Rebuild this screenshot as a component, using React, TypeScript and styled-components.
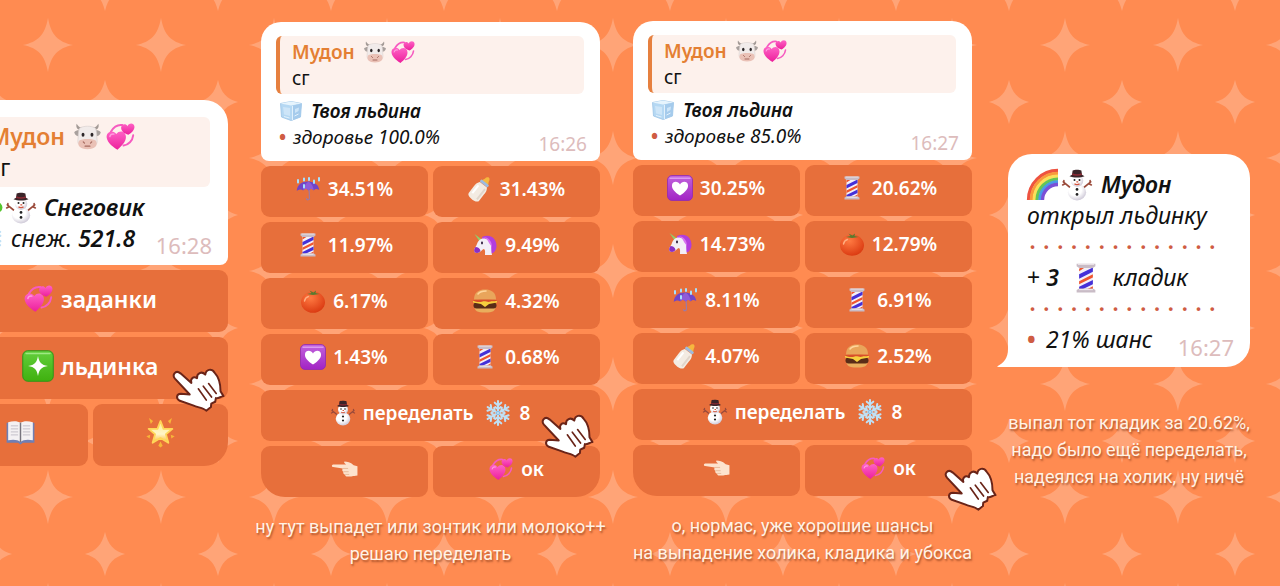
import React from 'react';
import styled, { createGlobalStyle } from 'styled-components';

type SizeType = 'medium' | 'large';

type IconName =
  | 'cow'
  | 'hearts'
  | 'ice'
  | 'umbrella'
  | 'bottle'
  | 'pole'
  | 'unicorn'
  | 'tomato'
  | 'burger'
  | 'heartBox'
  | 'snowman'
  | 'snowflake'
  | 'finger'
  | 'book'
  | 'star'
  | 'sparkle'
  | 'rainbow'
  | 'clover';

const ICONS: Record<IconName, React.ReactNode> = {
  cow: (
    <>
      <path d="M3 1.5C2 5 4 7 7.5 6.5L8 4.5C5.500 5 4.500 3.500 3 1.500ZM21 1.500C22 5 20 7 16.500 6.500L16 4.500C18.500 5 19.500 3.500 21 1.500Z" fill="#a39a96" />
      <path d="M1 8.500C3 6.500 5.500 6.500 7 8L6 12C3.500 12 1.500 11 1 8.500ZM23 8.500C21 6.500 18.500 6.500 17 8L18 12C20.500 12 22.500 11 23 8.500Z" fill="#a8a09d" />
      <path d="M5.500 5C9 3 15 3 18.500 5C20 8 19.500 12 20 16C20.500 22.500 3.500 22.500 4 16C4.500 12 4 8 5.500 5Z" fill="#f1ebea" stroke="#d6cdcb" strokeWidth=".5" />
      <path d="M5 15.500C7 13.500 17 13.500 19 15.500C21 19.500 18 22.500 12 22.500C6 22.500 3 19.500 5 15.500Z" fill="#eac1b6" />
      <ellipse cx="8.300" cy="10.500" rx="1.200" ry="1.700" fill="#2c2628" />
      <ellipse cx="15.700" cy="10.500" rx="1.200" ry="1.700" fill="#2c2628" />
      <path d="M8.500 16.500L9.500 17.500M15.500 16.500L14.500 17.500M10 20H14" stroke="#a5695e" strokeWidth="1" strokeLinecap="round" />
    </>
  ),
  hearts: (
    <>
      <path d="M4 8C7 3 10 2 13.500 2.500M22.500 11C22 15.500 18.500 19 14.500 19.500" stroke="#f65bc0" strokeWidth="1.600" fill="none" strokeLinecap="round" />
      <path d="M9.500 23C4 19.500 .2 15.500 .5 11.500C1 7.500 6.500 6.500 8.500 10C11 6.500 16.500 7.500 16.500 12.500C16.500 16.500 13 20 9.500 23Z" fill="url(#pink)" />
      <path d="M18.500 10.500C15 9.500 12.500 7.500 12.500 4.500C13 1.500 16.500 1 17.800 3.500C18.500 .8 23 .3 23.500 3.500C24 6.500 21 9 18.500 10.500Z" fill="url(#pink)" />
      <path d="M3.200 12C3.500 10.500 5 9.500 6.500 10" stroke="#ff9fe0" strokeWidth="1.200" fill="none" strokeLinecap="round" />
    </>
  ),
  ice: (
    <>
      <path d="M1.500 4.500L12 2.500L22.500 4.500L21.500 18L12 21.500L2.500 18Z" fill="#b5d8f3" stroke="#9cc4e6" strokeWidth=".8" strokeLinejoin="round" />
      <path d="M1.500 4.500L12 6.500L22.500 4.500L12 2.500Z" fill="#e6f4fd" />
      <path d="M14 6.500L22.500 4.500L21.500 18L13 21.500Z" fill="#a5cbec" />
      <path d="M4 8L11 9V17L5 15.500ZM16 10L20 8.500L19.500 12L16 14Z" fill="#cde5f8" />
      <path d="M15.500 17L19.500 15M5 17.500L10.500 19M13.500 7V21" stroke="#e2f1fc" strokeWidth="1" />
    </>
  ),
  umbrella: (
    <>
      <path d="M13 10L13.500 21C13.500 23 11 23.500 10.500 21.500" stroke="#9a7aa8" strokeWidth="1.200" fill="none" strokeLinecap="round" />
      <path d="M.8 14C1 7 7 4 12.500 4.500C18 4.500 23 8 23.200 13C21 11.500 19 11.500 17.800 13.500C16.500 11.500 14 11.500 12.700 13.500C11 11.500 8.500 11.500 7.200 13.500C5.500 12 3 12 .8 14Z" fill="#7145c8" />
      <path d="M12.500 4.500C9 7 7.500 10 7.200 13.500C8.500 11.500 11 11.500 12.700 13.500C14 11.500 16.500 11.500 17.800 13.500C17.500 10 16 6.500 12.500 4.500Z" fill="#8f5bd8" />
      <path d="M2 3V5.500M8 1.500V3.500M13 1V3M18 3.500V6M23 1V3.500M8 8V10.500" stroke="#a5e0ff" strokeWidth="2" strokeLinecap="round" />
    </>
  ),
  bottle: (
    <g transform="rotate(38 12 12)">
      <path d="M9.500 1C10-3.500 14-3.500 14.500 1L16 4H8Z" fill="#f6b73f" />
      <rect x="7" y="3.500" width="10" height="2.800" rx="1" fill="#9dbbe0" />
      <path d="M7.500 6.500H16.500C19 10 18.500 12 18.500 14V22C18.500 26 5.500 26 5.500 22V14C5.500 12 5 10 7.500 6.500Z" fill="#f3ebe2" />
      <path d="M16 9V22" stroke="#e0d5ca" strokeWidth="2" />
      <path d="M8.500 10V20" stroke="#fff" strokeWidth="2" />
    </g>
  ),
  pole: (
    <>
      <rect x="6.500" y="3" width="11" height="18" fill="#f4f0f6" />
      <path d="M6.500 9L17.500 3.500V7L6.500 12.500ZM6.500 19L17.500 13.500V17L8 21.500H6.500Z" fill="#4530d8" />
      <path d="M6.500 4.500L9 3H12L6.500 6.500ZM6.500 14.500L17.500 9V11.500L6.500 17ZM13 21L17.500 18.500V21Z" fill="#f0552f" />
      <path d="M4.500 .5H19.500V2.500L17.500 4H6.500L4.500 2.500ZM4.500 23.500H19.500V21.500L17.500 20.300H6.500L4.500 21.500Z" fill="#c9bcc6" />
      <path d="M5.500 1H18.500M6.500 21.300H17.500" stroke="#f3edf1" strokeWidth=".8" />
    </>
  ),
  unicorn: (
    <>
      <path d="M1.500 1L9.500 7L7 9Z" fill="#8fd06c" />
      <path d="M9 4C16 .5 23.500 4 23.500 13C23.500 17 21 20 18.500 20.500L15 13L9 8Z" fill="#b23ddd" />
      <path d="M6 7.500C10 3.500 17 6 18 12C18.500 15 18 19 19 22H12C12 19 12.500 17 11 16C9 16.500 7 20 4 20C.5 20 .5 16.500 2.500 14C4 12 4 9.500 6 7.500Z" fill="#f3eef6" />
      <path d="M2.500 14C.5 16.500 .5 20 4 20C5.500 20 6.500 19 7.500 18C7 15.500 5 14 2.500 14Z" fill="#8a2fc4" />
      <path d="M9 4.500C13 4 14.500 7 15.500 9C17 12 18 11 18.500 15C20 10 16 3 9 4.500Z" fill="#d873f0" />
      <ellipse cx="9" cy="10" rx="1" ry="1.400" fill="#32213f" />
    </>
  ),
  tomato: (
    <>
      <ellipse cx="12" cy="13.200" rx="12" ry="10.600" fill="url(#tomato)" />
      <path d="M12 6L6 5L10.500 4L8.500 1.500L12.500 3.500L15 1.500L14.500 4L18.500 5Z" fill="#5a7a2f" />
      <path d="M3.500 12C4 9.500 5.500 8 7.500 7.500" stroke="#ffad80" strokeWidth="1.400" fill="none" strokeLinecap="round" />
    </>
  ),
  burger: (
    <>
      <path d="M1.500 17H22.500C22.500 22 20 23.500 12 23.500C4 23.500 1.500 22 1.500 17Z" fill="#e9ae5d" />
      <rect x=".5" y="13.500" width="23" height="6" rx="3" fill="#5a2c17" />
      <path d="M0 12H24V13.500L16 15L12 18L8 15L0 13.500Z" fill="#f7cf3e" />
      <path d="M0 11.500C3 9.500 21 9.500 24 11.500C22 13 19 11.500 17 12.800C14 13.500 12 11.500 9 12.800C6 13.500 3 13 0 11.500Z" fill="#d94f2a" />
      <path d="M1 10.500C1 3 6 .5 12 .5C18 .5 23 3 23 10.500Z" fill="#e9a55b" />
      <path d="M5 5C7 2.500 10 2 13 2" stroke="#ffd69c" strokeWidth="1.600" fill="none" strokeLinecap="round" />
    </>
  ),
  heartBox: (
    <>
      <rect x="-.5" y="-.5" width="25" height="25" rx="4.500" fill="url(#violet)" stroke="#8f2ab4" strokeWidth=".8" />
      <path d="M2 2.200H22" stroke="#dd9af0" strokeWidth="1.400" strokeLinecap="round" />
      <path d="M12 19.500C6.500 16 3.500 12.500 4 9C4.500 5 10 4.500 12 8.500C14 4.500 19.500 5 20 9C20.500 12.500 17.500 16 12 19.500Z" fill="#fff" />
    </>
  ),
  snowman: (
    <>
      <path d="M6.500 14L1 9.500M2.500 11L.5 12M17.500 14L23 9.500M21.500 11L23.500 12M1.500 8.500V10M22.500 8.500V10" stroke="#9a4a3a" strokeWidth="1.300" strokeLinecap="round" />
      <ellipse cx="12" cy="17.800" rx="7.300" ry="6.600" fill="url(#snow)" />
      <circle cx="12" cy="8.500" r="5" fill="url(#snow)" />
      <path d="M8.500 .3C10-.5 14-.5 15.500 .3L16 3.800L18 5C15 6.300 9 6.300 6 5L8 3.800Z" fill="#3b2429" />
      <path d="M8.200 3.200C10 4.200 14 4.200 15.800 3.200" stroke="#8d2b35" strokeWidth="1.200" fill="none" />
      <circle cx="10" cy="8" r=".8" fill="#222" />
      <circle cx="14" cy="8" r=".8" fill="#222" />
      <path d="M11.500 9.500H13M10 11C11 12 13 12 14 11" stroke="#d4543c" strokeWidth="1" fill="none" />
      <circle cx="12" cy="15.500" r="1.100" fill="#222" />
      <circle cx="12" cy="19.500" r="1.100" fill="#222" />
    </>
  ),
  snowflake: (
    <g stroke="#bfe0f5" strokeWidth="1.900" strokeLinecap="round" fill="none">
      {[0, 60, 120, 180, 240, 300].map((deg) => (
        <path key={deg} d="M12 12V1M12 5L9 2.500M12 5L15 2.500M12 8.500L9.500 6.500M12 8.500L14.500 6.500" transform={`rotate(${deg} 12 12)`} />
      ))}
      <circle cx="12" cy="12" r="1.500" stroke="#8bbfe6" strokeWidth="1" />
    </g>
  ),
  finger: (
    <>
      <path d="M1 7.800C-.5 8 -.5 10 1 10.200L10 11.500C9 13 9.500 14 10.500 14.500C10 16 11 17 12 17.200C12.500 19 14 19 15 19C18 19 19 18.500 23.500 18V9.500L20 8.500C17 5.500 14 5 11.500 5C10.500 6 12 7 13 7.800Z" fill="#fde3cd" />
      <path d="M10.500 11.500H14.500M11 14.500H15M12.500 17H15.500" stroke="#e4b795" strokeWidth=".8" strokeLinecap="round" />
    </>
  ),
  book: (
    <>
      <path d="M.5 4H23.500V20.500H14L12 22L10 20.500H.5Z" fill="#6f7fb4" />
      <path d="M1.800 3.500C6 2 10 2.500 12 4C14 2.500 18 2 22.200 3.500V18.500C18 17.500 14 18 12 20C10 18 6 17.500 1.800 18.500Z" fill="#f4f1f3" />
      <path d="M12 4V20" stroke="#77747e" strokeWidth="1.200" />
      <path d="M4 6.500H10M4 9H10M4 11.500H10M4 14H10M14 6.500H20M14 9H20M14 11.500H20M14 14H20" stroke="#c3bfc8" strokeWidth=".8" />
    </>
  ),
  star: (
    <>
      <path d="M12 2.500L14.500 9H21.800L16.500 13.500L18.500 20.500L12 16.500L5.500 20.500L7.500 13.500L2.200 9H9.500Z" fill="url(#gold)" stroke="#ffd658" strokeWidth="1.500" strokeLinejoin="round" />
      <path d="M2.500 0L5.800 2.500L4 5ZM21.500 0L18.200 2.500L20 5ZM.3 15L3.500 13.800L3 17ZM23.700 15L20.500 13.800L21 17ZM12 19.500L13.800 23L12 24.500L10.200 23Z" fill="#f7b63a" />
    </>
  ),
  sparkle: (
    <>
      <rect x="-.2" y="-.2" width="24.400" height="24.400" rx="4" fill="url(#green)" stroke="#2e9418" strokeWidth=".8" />
      <path d="M2.500 2H21.500" stroke="#9fe883" strokeWidth="1.300" strokeLinecap="round" />
      <path d="M12 4C13 9.500 14.500 11 20 12C14.500 13 13 14.500 12 20C11 14.500 9.500 13 4 12C9.500 11 11 9.500 12 4Z" fill="#fff" />
    </>
  ),
  rainbow: (
    <g fill="none" strokeWidth="2.600">
      <path d="M1.200 24A22.800 22.800 0 0 1 24 1.200" stroke="#ee5340" />
      <path d="M3.400 24A20.600 20.600 0 0 1 24 3.400" stroke="#f99a3c" />
      <path d="M5.600 24A18.400 18.400 0 0 1 24 5.600" stroke="#fbe05a" />
      <path d="M7.800 24A16.200 16.200 0 0 1 24 7.800" stroke="#63c656" />
      <path d="M10 24A14 14 0 0 1 24 10" stroke="#4a9ae8" />
      <path d="M12 24A12 12 0 0 1 24 12" stroke="#7a50d6" />
    </g>
  ),
  clover: (
    <g fill="#55c52e">
      <circle cx="6" cy="12" r="5" />
      <circle cx="19" cy="12" r="4.500" />
      <circle cx="12" cy="6" r="5" />
      <path d="M11 10H13L14 23H12Z" />
    </g>
  ),
};

interface IconProps {
  name: IconName;
  size?: number;
}

const Icon = ({ name, size = 24 }: IconProps) => (
  <IconSvg viewBox="0 0 24 24" width={size} height={size} aria-hidden="true">
    {ICONS[name]}
  </IconSvg>
);

const Pointer = ({ right, top }: { right: number; top: number }) => (
  <PointerSvg viewBox="0 0 162 142" $right={right} $top={top} aria-hidden="true">
    <path
      d="M10 22C15 16 23 18 29 23L61 51C57 40 66 29 78 37C77 22 92 14 103 26C105 10 122 6 131 20C144 34 149 56 149 76L158 91C149 92 143 99 135 97L133 108L121 114L120 124L106 135C98 126 82 126 66 119L26 105C13 98 16 85 29 84L56 86L12 39C6 32 6 27 10 22Z"
      fill="#fff"
      stroke="#6a2418"
      strokeWidth="6"
      strokeLinejoin="round"
    />
    <path d="M82 69L106 103M97 61L122 94M113 53L136 83" stroke="#6a2418" strokeWidth="5" strokeLinecap="round" />
  </PointerSvg>
);

// star wallpaper and the gradients shared by the icons
const Wallpaper = () => (
  <WallpaperSvg aria-hidden="true">
    <defs>
      <pattern id="stars" width="113" height="113" patternUnits="userSpaceOnUse" x="-8" y="-11">
        <path d="M56 29C59 46 66 53 81 56C66 59 59 66 56 83C53 66 46 59 31 56C46 53 53 46 56 29Z" fill="#ffa477" />
        <g fill="#ffa477">
          {[
            [0, 0],
            [113, 0],
            [0, 113],
            [113, 113],
          ].map(([x, y]) => (
            <path key={`${x}-${y}`} transform={`translate(${x} ${y})`} d="M0-22C3-9 9-3 20 0C9 3 3 9 0 22C-3 9-9 3-20 0C-9-3-3-9 0-22Z" />
          ))}
        </g>
      </pattern>
      <linearGradient id="pink" x1="0" y1="0" x2="0" y2="1">
        <stop offset="0" stopColor="#ff62c6" />
        <stop offset="1" stopColor="#ec1f9b" />
      </linearGradient>
      <linearGradient id="violet" x1="0" y1="0" x2="0" y2="1">
        <stop offset="0" stopColor="#c163dc" />
        <stop offset="1" stopColor="#a223c4" />
      </linearGradient>
      <linearGradient id="green" x1="0" y1="0" x2="0" y2="1">
        <stop offset="0" stopColor="#63cf3c" />
        <stop offset="1" stopColor="#3fb00f" />
      </linearGradient>
      <radialGradient id="tomato" cx=".4" cy=".3" r=".75">
        <stop offset="0" stopColor="#ff7a42" />
        <stop offset="1" stopColor="#d9370f" />
      </radialGradient>
      <radialGradient id="snow" cx=".4" cy=".35" r=".7">
        <stop offset=".5" stopColor="#ffffff" />
        <stop offset="1" stopColor="#c9c3d3" />
      </radialGradient>
      <linearGradient id="gold" x1="0" y1="0" x2="0" y2="1">
        <stop offset="0" stopColor="#ffeb8a" />
        <stop offset=".6" stopColor="#fff6c9" />
        <stop offset="1" stopColor="#fcb62e" />
      </linearGradient>
    </defs>
    <rect width="100%" height="100%" fill="url(#stars)" />
  </WallpaperSvg>
);

interface Chance {
  icon: IconName;
  value: string;
}

const firstChances: Chance[] = [
  { icon: 'umbrella', value: '34.51%' },
  { icon: 'bottle', value: '31.43%' },
  { icon: 'pole', value: '11.97%' },
  { icon: 'unicorn', value: '9.49%' },
  { icon: 'tomato', value: '6.17%' },
  { icon: 'burger', value: '4.32%' },
  { icon: 'heartBox', value: '1.43%' },
  { icon: 'pole', value: '0.68%' },
];

const secondChances: Chance[] = [
  { icon: 'heartBox', value: '30.25%' },
  { icon: 'pole', value: '20.62%' },
  { icon: 'unicorn', value: '14.73%' },
  { icon: 'tomato', value: '12.79%' },
  { icon: 'umbrella', value: '8.11%' },
  { icon: 'pole', value: '6.91%' },
  { icon: 'bottle', value: '4.07%' },
  { icon: 'burger', value: '2.52%' },
];

interface FloeProps {
  health: string;
  time: string;
  chances: Chance[];
  pointerOn: 'redo' | 'ok';
}

const Floe = ({ health, time, chances, pointerOn }: FloeProps) => (
  <>
    <Card $size="medium">
      <Quote $size="medium">
        <Author>
          Мудон <Icon name="cow" />
          <Icon name="hearts" />
        </Author>
        <div>сг</div>
      </Quote>
      <Line>
        <Icon name="ice" />
        <Strong $indent>Твоя льдина</Strong>
      </Line>
      <Line>
        <Bullet $size="medium">•</Bullet>
        <em>здоровье {health}</em>
      </Line>
      <Time $size="medium">{time}</Time>
    </Card>
    <Keyboard $size="medium">
      {chances.map(({ icon, value }, i) => (
        <Key key={i}>
          <Icon name={icon} />
          {value}
        </Key>
      ))}
      <Key $wide>
        <Icon name="snowman" />
        переделать
        <IconGap />
        <Icon name="snowflake" size={26} />8
        {pointerOn === 'redo' && <Pointer right={6} top={22} />}
      </Key>
      <Key aria-label="назад">
        <Icon name="finger" size={26} />
      </Key>
      <Key>
        <Icon name="hearts" />
        ок
        {pointerOn === 'ok' && <Pointer right={-25} top={20} />}
      </Key>
    </Keyboard>
  </>
);

const App = () => (
  <Page>
    <GlobalStyle />
    <Wallpaper />
    <MenuColumn>
      <Card $size="large">
        <Quote $size="large">
          <Author>
            Мудон <Icon name="cow" size={29} />
            <Icon name="hearts" size={29} />
          </Author>
          <div>сг</div>
        </Quote>
        <Line>
          <Icon name="clover" size={29} />
          <Icon name="snowman" size={30} />
          <Strong $indent>Снеговик</Strong>
        </Line>
        <Line>
          <Icon name="snowflake" size={29} />
          <Phrase>
            снеж. <Strong>521.8</Strong>
          </Phrase>
        </Line>
        <Time $size="large">16:28</Time>
      </Card>
      <Keyboard $size="large">
        <Key $wide>
          <Icon name="hearts" size={29} />
          заданки
        </Key>
        <Key $wide>
          <Icon name="sparkle" size={30} />
          льдинка
          <Pointer right={3} top={29} />
        </Key>
        <Key aria-label="книга">
          <Icon name="book" size={29} />
        </Key>
        <Key aria-label="звезда">
          <Icon name="star" size={29} />
        </Key>
      </Keyboard>
    </MenuColumn>

    <FloeColumn $top={22}>
      <Floe health="100.0%" time="16:26" chances={firstChances} pointerOn="redo" />
      <Caption $gap={16}>
        <span>ну тут выпадет или зонтик или молоко++</span>
        <span>решаю переделать</span>
      </Caption>
    </FloeColumn>

    <FloeColumn $top={21}>
      <Floe health="85.0%" time="16:27" chances={secondChances} pointerOn="ok" />
      <Caption $gap={16}>
        <span>о, нормас, уже хорошие шансы</span>
        <span>на выпадение холика, кладика и убокса</span>
      </Caption>
    </FloeColumn>

    <ResultColumn>
      <Bubble>
        <Tail viewBox="0 0 24 24" aria-hidden="true">
          <path d="M11 0V6C11 15 7 20 0 23.500C1 24 2 24 3 24H24V0Z" fill="#fff" />
        </Tail>
        <ResultLine>
          <Icon name="rainbow" size={31} />
          <Icon name="snowman" size={30} />
          <Strong $indent>Мудон</Strong>
        </ResultLine>
        <ResultLine>
          <em>открыл льдинку</em>
        </ResultLine>
        <Dots>· · · · · · · · · · · · · ·</Dots>
        <ResultLine $spaced>
          <span>
            + <Strong>3</Strong>
          </span>
          <Icon name="pole" size={30} />
          <em>кладик</em>
        </ResultLine>
        <Dots>· · · · · · · · · · · · · ·</Dots>
        <ResultLine>
          <Bullet $size="large">•</Bullet>
          <em>21% шанс</em>
        </ResultLine>
        <Time $size="large">16:27</Time>
      </Bubble>
      <Caption $gap={42}>
        <span>выпал тот кладик за 20.62%,</span>
        <span>надо было ещё переделать,</span>
        <span>надеялся на холик, ну ничё</span>
      </Caption>
    </ResultColumn>
  </Page>
);

export default App;

const GlobalStyle = createGlobalStyle`
  * {
    box-sizing: border-box;
  }
  body {
    margin: 0;
    background: #ff8b51;
    font-family: 'Noto Sans', sans-serif;
    overflow-x: hidden;
  }
`;

const Page = styled.main`
  position: relative;
  display: grid;
  grid-template-columns: minmax(0, 228fr) minmax(0, 339fr) minmax(0, 339fr) minmax(0, 245fr);
  column-gap: 33px;
  align-items: start;
  min-height: 100vh;
  padding-right: 30px;
  overflow: hidden;
`;

const WallpaperSvg = styled.svg`
  position: absolute;
  inset: 0;
  width: 100%;
  height: 100%;
`;

const IconSvg = styled.svg`
  flex: none;
  vertical-align: middle;
  overflow: visible;
`;

const PointerSvg = styled.svg<{ $right: number; $top: number }>`
  position: absolute;
  z-index: 2;
  right: ${({ $right }) => $right}px;
  top: ${({ $top }) => $top}px;
  width: 54px;
  height: 47px;
`;

const MenuColumn = styled.section`
  position: relative;
  margin-left: -47px;
  padding-top: 100px;
`;

const FloeColumn = styled.section<{ $top: number }>`
  position: relative;
  padding-top: ${({ $top }) => $top}px;
`;

const ResultColumn = styled.section`
  position: relative;
  padding: 154px 0 0 3px;
`;

const Card = styled.article<{ $size: SizeType }>`
  position: relative;
  padding: ${({ $size }) => ($size === 'medium' ? '14px 16px 11px 15px' : '17px 18px 11px')};
  border-radius: ${({ $size }) => ($size === 'medium' ? '20px 20px 8px 8px' : '24px 24px 8px 8px')};
  background: #fff;
  color: #111;
  font-size: ${({ $size }) => ($size === 'medium' ? 19 : 23)}px;
  line-height: ${({ $size }) => ($size === 'medium' ? 26 : 31)}px;
`;

const Quote = styled.div<{ $size: SizeType }>`
  margin-bottom: ${({ $size }) => ($size === 'medium' ? 4 : 5)}px;
  padding: ${({ $size }) => ($size === 'medium' ? '3px 12px' : '4px 14px')};
  border-left: 4px solid #e6803f;
  border-radius: 6px;
  background: #fdf1ec;
`;

const Author = styled.div`
  display: flex;
  align-items: center;
  gap: 4px;
  color: #e47f33;
  font-weight: 600;

  ${IconSvg}:first-of-type {
    margin-left: 4px;
  }
`;

const Line = styled.div`
  display: flex;
  align-items: center;
  gap: 3px;
  padding-left: 3px;
`;

const Strong = styled.strong<{ $indent?: boolean }>`
  margin-left: ${({ $indent }) => ($indent ? 5 : 0)}px;
  font-style: italic;
  font-weight: 600;
`;

const Phrase = styled.em`
  margin-left: 5px;
`;

const Bullet = styled.span<{ $size: SizeType }>`
  width: ${({ $size }) => ($size === 'medium' ? 11 : 15)}px;
  color: #cf5c43;
  font-weight: 700;
`;

const Time = styled.time<{ $size: SizeType }>`
  position: absolute;
  right: ${({ $size }) => ($size === 'medium' ? 13 : 16)}px;
  bottom: 4px;
  color: #ddbcbc;
  font-size: ${({ $size }) => ($size === 'medium' ? 19 : 22)}px;
`;

const Keyboard = styled.div<{ $size: SizeType }>`
  display: grid;
  grid-template-columns: 1fr 1fr;
  grid-auto-rows: ${({ $size }) => ($size === 'medium' ? 51 : 62)}px;
  gap: 5px;
  margin-top: 5px;
  font-size: ${({ $size }) => ($size === 'medium' ? 19 : 23)}px;

  button:last-child {
    border-bottom-right-radius: 24px;
  }
  button:nth-last-child(2) {
    border-bottom-left-radius: 24px;
  }
`;

const Key = styled.button<{ $wide?: boolean }>`
  position: relative;
  display: flex;
  align-items: center;
  justify-content: center;
  gap: 8px;
  grid-column: ${({ $wide }) => ($wide ? '1 / -1' : 'auto')};
  padding: 0 0 5px;
  border: 0;
  border-radius: 9px;
  background: #e76f3b;
  color: #fff;
  font-family: inherit;
  font-size: inherit;
  font-weight: 600;
  cursor: pointer;
`;

const IconGap = styled.span`
  margin-left: -4px;
`;

const Caption = styled.p<{ $gap: number }>`
  display: flex;
  flex-direction: column;
  align-items: center;
  margin: ${({ $gap }) => $gap}px -20px 0;
  color: #fff3e6;
  font-family: Roboto, sans-serif;
  font-size: 18px;
  font-weight: 400;
  line-height: 27px;
  white-space: nowrap;
  text-shadow: 1px 2px 2px rgba(120, 50, 20, 0.6);
`;

const Bubble = styled.article`
  position: relative;
  padding: 15px 19px 12px;
  border-radius: 24px 24px 24px 0;
  background: #fff;
  color: #111;
  font-size: 23px;
  line-height: 31px;
`;

const Tail = styled.svg`
  position: absolute;
  left: -11px;
  bottom: 0;
  width: 24px;
  height: 24px;
`;

const ResultLine = styled.div<{ $spaced?: boolean }>`
  display: flex;
  align-items: center;
  gap: ${({ $spaced }) => ($spaced ? 12 : 4)}px;
  height: 31px;
`;

const Dots = styled.div`
  height: 31px;
  padding-left: 2px;
  color: #cf5c43;
  font-size: 26px;
  font-weight: 500;
  white-space: nowrap;
`;
